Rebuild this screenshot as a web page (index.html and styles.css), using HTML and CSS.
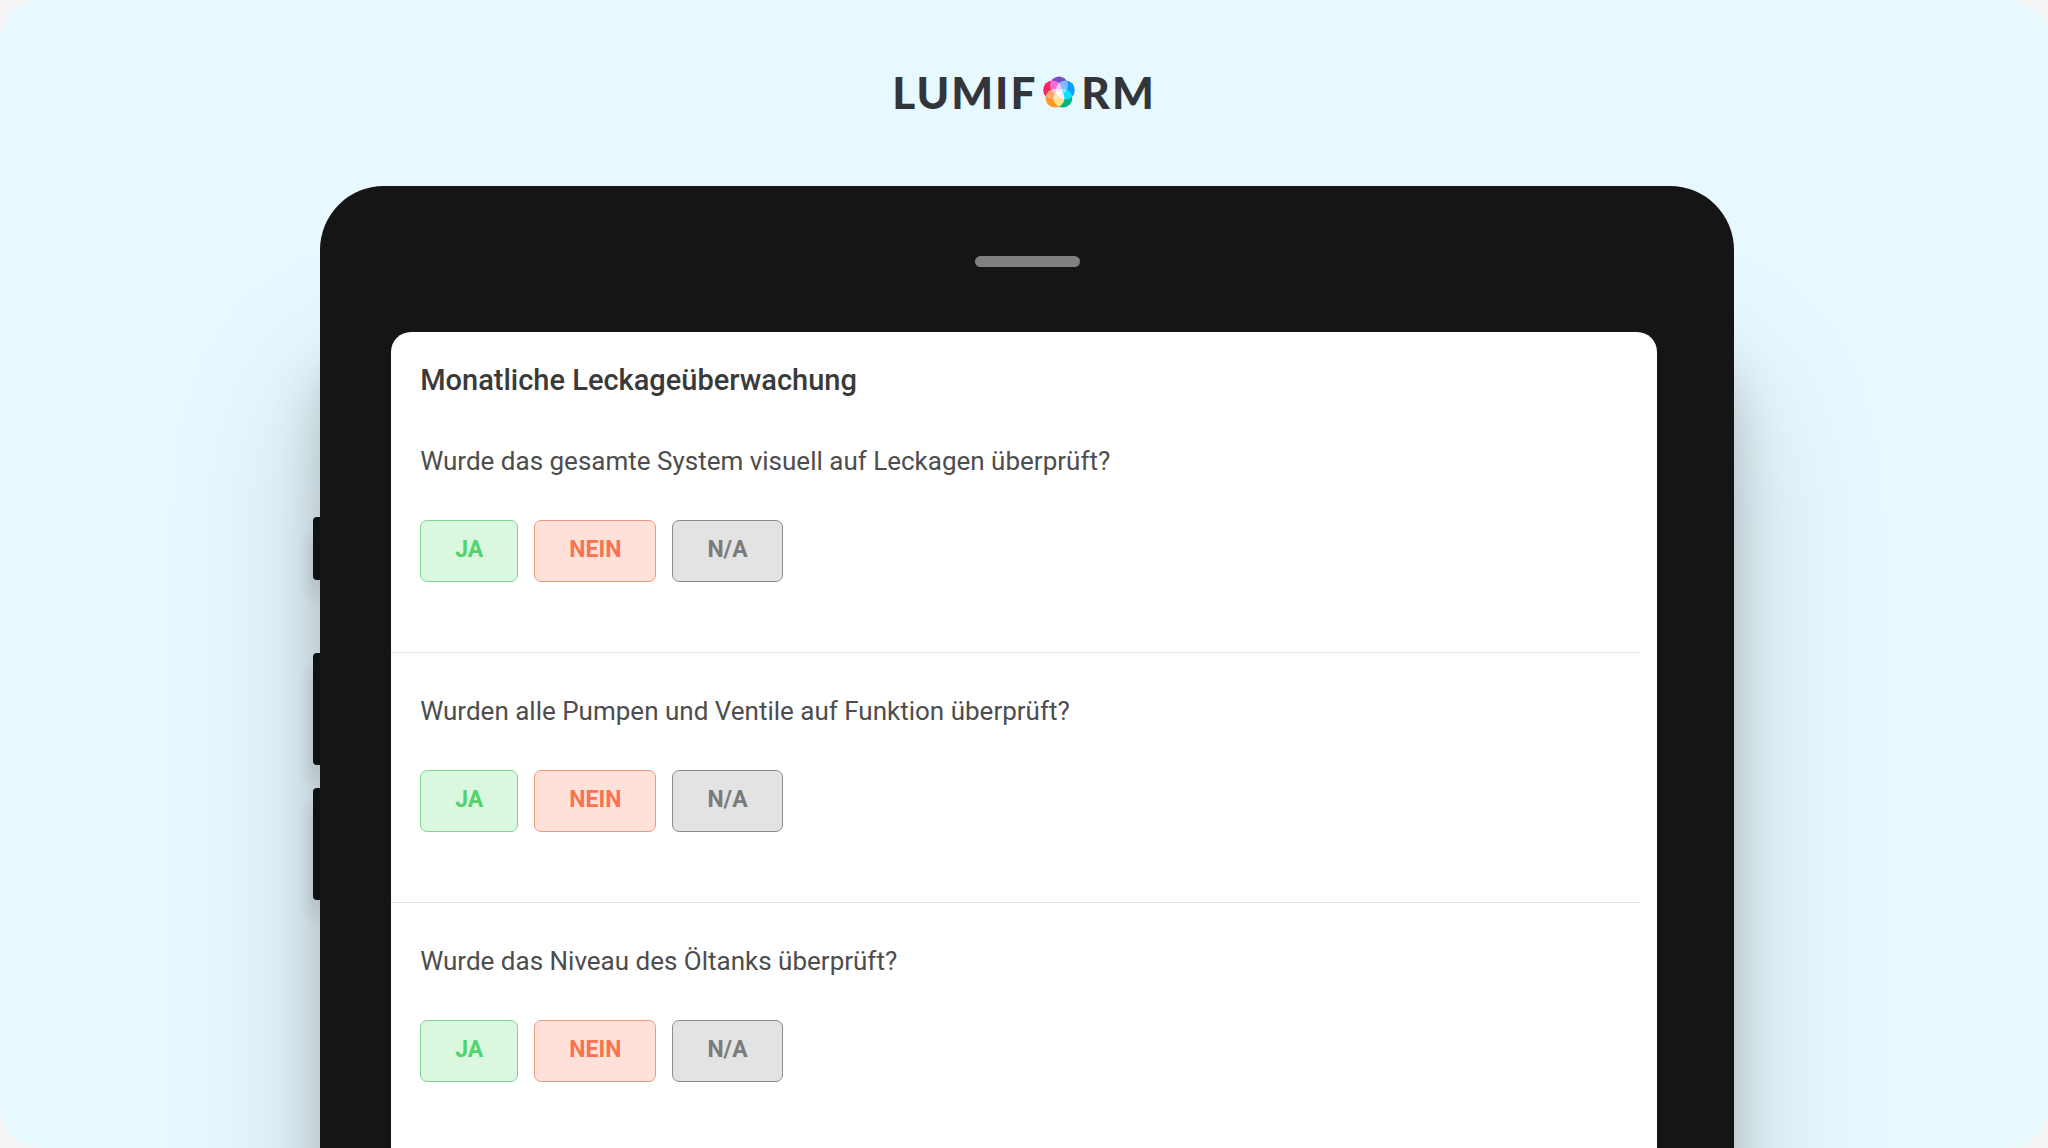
FILE: index.html
```html
<!DOCTYPE html>
<html lang="de">

<head>
    <meta charset="UTF-8">
    <meta name="viewport" content="width=device-width, initial-scale=1.0">
    <title>Lumiform - Monatliche Leckageüberwachung</title>
    <link rel="stylesheet" href="styles.css">
</head>

<body>

    <div class="page">
        <header>
            <div class="logo">
                <span>LUMIF</span>
                <svg class="logo-icon" viewBox="0 0 32 32" aria-hidden="true">
                    <circle cx="16" cy="9.4" r="9" fill="#7a4fc4" />
                    <circle cx="22.4" cy="14" r="9.4" fill="#0a9cff" />
                    <circle cx="19.9" cy="22.2" r="9.4" fill="#00b87c" />
                    <circle cx="12" cy="22.2" r="9.4" fill="#ff9a1f" />
                    <circle cx="9.6" cy="14" r="9.4" fill="#f5265f" />
                </svg>
                <span>RM</span>
            </div>
        </header>

        <div class="device">
            <div class="side-keys">
                <div class="key key-small"></div>
                <div class="key"></div>
                <div class="key"></div>
            </div>

            <div class="tablet">
                <div class="speaker"></div>

                <main class="screen">
                    <h1>Monatliche Leckageüberwachung</h1>

                    <section class="question">
                        <p>Wurde das gesamte System visuell auf Leckagen überprüft?</p>
                        <div class="answers">
                            <button type="button" class="btn yes">JA</button>
                            <button type="button" class="btn no">NEIN</button>
                            <button type="button" class="btn na">N/A</button>
                        </div>
                    </section>

                    <section class="question">
                        <p>Wurden alle Pumpen und Ventile auf Funktion überprüft?</p>
                        <div class="answers">
                            <button type="button" class="btn yes">JA</button>
                            <button type="button" class="btn no">NEIN</button>
                            <button type="button" class="btn na">N/A</button>
                        </div>
                    </section>

                    <section class="question">
                        <p>Wurde das Niveau des Öltanks überprüft?</p>
                        <div class="answers">
                            <button type="button" class="btn yes">JA</button>
                            <button type="button" class="btn no">NEIN</button>
                            <button type="button" class="btn na">N/A</button>
                        </div>
                    </section>
                </main>
            </div>
        </div>
    </div>

</body>

</html>
```
FILE: styles.css
```css
* {
    margin: 0;
    padding: 0;
    box-sizing: border-box;
}

body {
    font-family: Roboto, 'Liberation Sans', sans-serif;
    background: #f5f5f5;
}

.page {
    height: 100vh;
    overflow: hidden;
    background: #e7f8fe;
    border-radius: 40px;
}

header {
    display: flex;
    justify-content: center;
    padding: 66px 0 68px;
}

.logo {
    display: flex;
    align-items: center;
    gap: 6px;
    height: 52px;
    font-family: Lato, sans-serif;
    font-size: 44px;
    font-weight: 900;
    line-height: 52px;
    letter-spacing: 2px;
    color: #32363b;
}

.logo-icon {
    width: 32px;
    height: 32px;
    isolation: isolate;
}

.logo-icon circle {
    mix-blend-mode: screen;
}

/* Tablet */
.device {
    display: flex;
    width: 70%;
    margin: 0 auto;
    padding: 0 7px 0 6px;
}

.side-keys {
    width: 7px;
    padding-top: 331px;
}

.key {
    height: 112px;
    margin-bottom: 23px;
    background: #131616;
    border-radius: 4px 0 0 4px;
    box-shadow: 0 16px 16px rgba(0, 0, 0, 0.2);
}

.key-small {
    height: 63px;
    margin-bottom: 73px;
}

.tablet {
    flex: 1;
    padding: 70px 0 400px;
    background: #151515;
    border-radius: 64px;
    box-shadow: 0 190px 160px rgba(0, 0, 0, 0.16), 0 170px 50px rgba(0, 0, 0, 0.18);
}

.speaker {
    width: 105px;
    height: 11px;
    margin: 0 auto 65px;
    background: #808080;
    border-radius: 6px;
}

.screen {
    margin: 0 77px 0 71px;
    padding: 30px 0 60px;
    background: #fff;
    border-radius: 20px;
}

h1 {
    margin-bottom: 5px;
    padding-left: 29px;
    font-size: 29px;
    font-weight: 500;
    line-height: 36px;
    color: #3a3a3a;
}

.question {
    margin-right: 16px;
    padding: 41px 0 70px 29px;
    border-bottom: 1px solid #e4e4e4;
}

.question:last-child {
    border-bottom: none;
}

.question p {
    margin-bottom: 42px;
    font-size: 26px;
    line-height: 34px;
    color: #4d4d4d;
}

/* Answer buttons */
.answers {
    display: flex;
    gap: 16px;
}

.btn {
    height: 62px;
    padding: 0 34px 4px;
    border: 1px solid;
    border-radius: 7px;
    font-family: inherit;
    font-size: 23px;
    font-weight: 700;
    cursor: pointer;
}

.yes {
    background: #daf7df;
    border-color: #82d494;
    color: #51d46c;
}

.no {
    background: #ffe1da;
    border-color: #eb9a7c;
    color: #fa7350;
}

.na {
    background: #e3e3e3;
    border-color: #8c8c8c;
    color: #7b7b7b;
}
```
